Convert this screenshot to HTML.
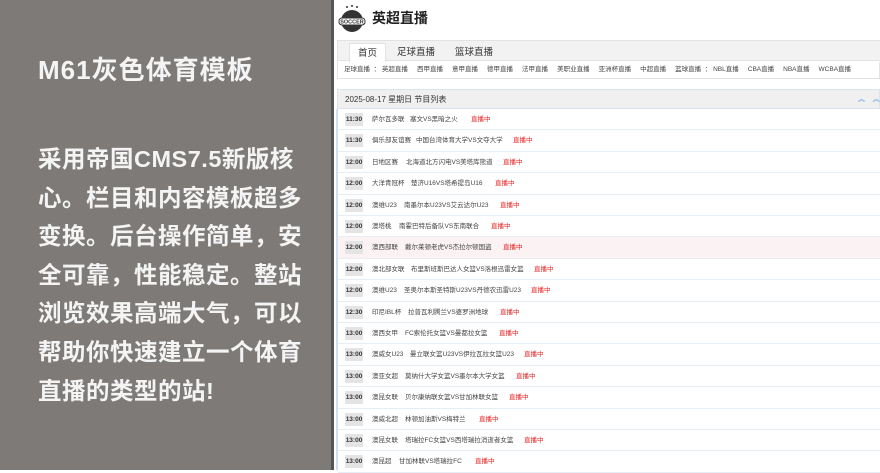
<!DOCTYPE html>
<html><head><meta charset="utf-8"><style>
*{margin:0;padding:0;box-sizing:border-box}
body{width:880px;height:470px;overflow:hidden;position:relative;background:#fff;font-family:"Liberation Sans","Noto Sans CJK SC",sans-serif}
.left{position:absolute;left:0;top:0;width:331px;height:470px;background:#7d7a77;color:#f4f4f4}
.left h1{position:absolute;left:38px;top:50px;font-size:26px;font-weight:bold;letter-spacing:1px}
.left p{position:absolute;left:38px;top:140px;width:275px;font-size:23.5px;line-height:38.6px;font-weight:bold;letter-spacing:0.5px}
.sep{position:absolute;left:331px;top:0;width:3px;height:470px;background:#555}
.abs{position:absolute;white-space:nowrap}
.nav{position:absolute;left:337px;top:40px;width:543px;height:21px;background:#f2f2f2;border:1px solid #e2e2e2;border-right:none}
.tab{position:absolute;top:2px;height:19px;font-size:9.5px;color:#333;line-height:19px}
.sub{position:absolute;left:337px;top:62px;width:543px;height:17px;border:1px solid #e3e3e3;border-top:none;font-size:6.5px;color:#444;line-height:16px}
.hd{position:absolute;left:337px;top:89px;width:543px;height:20px;background:#f0f0f0;border:1px solid #dbe4ee;font-size:8px;color:#333;line-height:19px;padding-left:7px}
.list{position:absolute;left:336px;top:109px;width:544px;height:361px;border-left:2px solid #cfe0f3}
.row{position:absolute;left:0;width:544px;height:21.4px;border-bottom:1px solid #e6edf5;font-size:6.5px;color:#444;line-height:21px}
.t{position:absolute;left:7px;top:4px;height:13px;width:18px;background:#e4e4e4;font-size:6.5px;line-height:13px;text-align:center;color:#333;font-weight:bold}
.r{color:#e42020;position:absolute}
</style></head><body>
<div class="left">
<h1>M61灰色体育模板</h1>
<p>采用帝国CMS7.5新版核心。栏目和内容模板超多变换。后台操作简单，安全可靠，性能稳定。整站浏览效果高端大气，可以帮助你快速建立一个体育直播的类型的站!</p>
</div>
<div class="sep"></div>
<svg class="abs" style="left:337px;top:4px" width="30" height="30" viewBox="0 0 30 30">
<circle cx="15" cy="17" r="11" fill="#333"/>
<rect x="2" y="14" width="26" height="7" rx="3" fill="#fff" stroke="#333" stroke-width="1"/>
<text x="15" y="19.5" font-size="5.5" text-anchor="middle" font-family="Liberation Sans" font-weight="bold" fill="#333">SOCCER</text>
<circle cx="10" cy="3" r="1" fill="#333"/><circle cx="15" cy="2" r="1" fill="#333"/><circle cx="20" cy="3" r="1" fill="#333"/>
</svg>
<div class="abs" style="left:372px;top:8px;font-size:14px;font-weight:bold;color:#222">英超直播</div>
<div class="nav">
<div class="tab" style="left:11px;width:37px;background:#fff;border:1px solid #e2e2e2;border-bottom:none;text-align:center">首页</div>
<div class="tab" style="left:59px">足球直播</div>
<div class="tab" style="left:117px">篮球直播</div>
</div>
<div class="sub"><span class="abs" style="left:6px">足球直播 &nbsp;： 英超直播 &nbsp;&nbsp;&nbsp; 西甲直播 &nbsp;&nbsp;&nbsp; 意甲直播 &nbsp;&nbsp;&nbsp; 德甲直播 &nbsp;&nbsp;&nbsp; 法甲直播 &nbsp;&nbsp;&nbsp; 美职业直播 &nbsp;&nbsp;&nbsp; 亚洲杯直播 &nbsp;&nbsp;&nbsp; 中超直播 &nbsp;&nbsp;&nbsp; 篮球直播 &nbsp;： NBL直播 &nbsp;&nbsp;&nbsp; CBA直播 &nbsp;&nbsp;&nbsp; NBA直播 &nbsp;&nbsp;&nbsp; WCBA直播</span></div>
<div class="hd">2025-08-17 星期日 节目列表<span class="abs" style="left:520px;color:#4a8fd8;font-size:7px">︽ &nbsp;&nbsp;&nbsp;︽</span></div>
<div class="list">
<div class="row" style="top:0"><span class="t">11:30</span><span class="abs" style="left:34px">萨尔瓦多联</span><span class="abs" style="left:72px">塞文VS黑暗之火</span><span class="r" style="left:133px">直播中</span></div>
<div class="row" style="top:21.4px"><span class="t">11:30</span><span class="abs" style="left:34px">俱乐部友谊赛</span><span class="abs" style="left:78px">中国台湾体育大学VS文夺大学</span><span class="r" style="left:175px">直播中</span></div>
<div class="row" style="top:42.8px"><span class="t">12:00</span><span class="abs" style="left:34px">日地区赛</span><span class="abs" style="left:68px">北海道北方闪电VS美塔库熊道</span><span class="r" style="left:165px">直播中</span></div>
<div class="row" style="top:64.2px"><span class="t">12:00</span><span class="abs" style="left:34px">大洋青冠杯</span><span class="abs" style="left:73px">楚济U16VS塔希提岛U16</span><span class="r" style="left:157px">直播中</span></div>
<div class="row" style="top:85.6px"><span class="t">12:00</span><span class="abs" style="left:34px">澳维U23</span><span class="abs" style="left:66px">南墨尔本U23VS艾云达尔U23</span><span class="r" style="left:162px">直播中</span></div>
<div class="row" style="top:107px"><span class="t">12:00</span><span class="abs" style="left:34px">澳塔桃</span><span class="abs" style="left:61px">南霍巴特后备队VS东南联合</span><span class="r" style="left:153px">直播中</span></div>
<div class="row" style="top:128.4px;background:#fbf3f3"><span class="t">12:00</span><span class="abs" style="left:34px">澳西部联</span><span class="abs" style="left:67px">戴尔莱顿老虎VS杰拉尔顿国盗</span><span class="r" style="left:165px">直播中</span></div>
<div class="row" style="top:149.8px"><span class="t">12:00</span><span class="abs" style="left:34px">澳北部女联</span><span class="abs" style="left:73px">布里斯班斯巴达人女篮VS洛根迅雷女篮</span><span class="r" style="left:196px">直播中</span></div>
<div class="row" style="top:171.2px"><span class="t">12:00</span><span class="abs" style="left:34px">澳维U23</span><span class="abs" style="left:66px">圣奥尔本斯圣特斯U23VS丹德农迅雷U23</span><span class="r" style="left:193px">直播中</span></div>
<div class="row" style="top:192.6px"><span class="t">12:30</span><span class="abs" style="left:34px">印尼IBL杯</span><span class="abs" style="left:70px">拉普瓦利腾兰VS婆罗洲地球</span><span class="r" style="left:162px">直播中</span></div>
<div class="row" style="top:214px"><span class="t">13:00</span><span class="abs" style="left:34px">澳西女甲</span><span class="abs" style="left:67px">FC索伦托女篮VS曼都拉女篮</span><span class="r" style="left:161px">直播中</span></div>
<div class="row" style="top:235.4px"><span class="t">13:00</span><span class="abs" style="left:34px">澳威女U23</span><span class="abs" style="left:72px">曼立联女篮U23VS伊拉瓦拉女篮U23</span><span class="r" style="left:186px">直播中</span></div>
<div class="row" style="top:256.8px"><span class="t">13:00</span><span class="abs" style="left:34px">澳亚女超</span><span class="abs" style="left:67px">莫纳什大学女篮VS墨尔本大学女篮</span><span class="r" style="left:178px">直播中</span></div>
<div class="row" style="top:278.2px"><span class="t">13:00</span><span class="abs" style="left:34px">澳昆女联</span><span class="abs" style="left:67px">贝尔康纳联女篮VS甘加林联女篮</span><span class="r" style="left:171px">直播中</span></div>
<div class="row" style="top:299.6px"><span class="t">13:00</span><span class="abs" style="left:34px">澳威北超</span><span class="abs" style="left:67px">林顿加油斯VS梅特兰</span><span class="r" style="left:141px">直播中</span></div>
<div class="row" style="top:321px"><span class="t">13:00</span><span class="abs" style="left:34px">澳昆女联</span><span class="abs" style="left:67px">塔瑞拉FC女篮VS西塔瑞拉消逝者女篮</span><span class="r" style="left:186px">直播中</span></div>
<div class="row" style="top:342.4px"><span class="t">13:00</span><span class="abs" style="left:34px">澳昆超</span><span class="abs" style="left:61px">甘加林联VS塔瑞拉FC</span><span class="r" style="left:137px">直播中</span></div>
</div>
</body></html>
